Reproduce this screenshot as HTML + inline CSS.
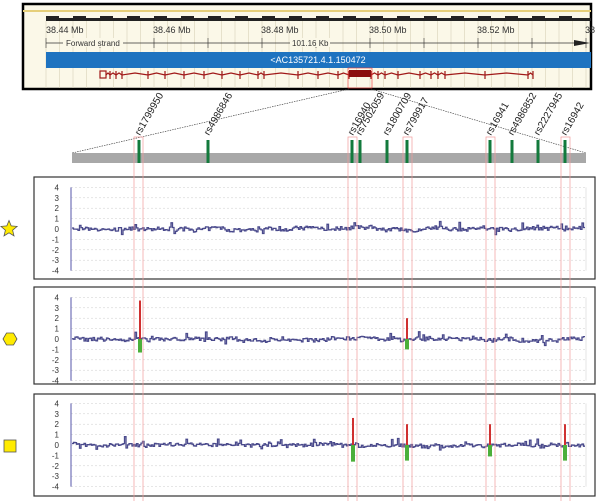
<!DOCTYPE html>
<html><head><meta charset="utf-8"><style>
html,body{margin:0;padding:0;background:#fff;width:600px;height:501px;overflow:hidden}
svg{display:block;font-family:"Liberation Sans",sans-serif}
</style></head><body>
<svg id="s" width="600" height="501" viewBox="0 0 600 501" xmlns="http://www.w3.org/2000/svg">
<rect x="23" y="4" width="568" height="85" fill="#fbf8e8" stroke="#000" stroke-width="2.5"/>
<line x1="23" y1="11" x2="591" y2="11" stroke="#e6cf7a" stroke-width="2"/>
<g id="grid" stroke="#d8d2b8" stroke-width="0.6"></g>
<rect x="46" y="18" width="545" height="3" fill="#222"/>
<g id="ticks"></g>
<g font-size="9" fill="#333">
<text x="46" y="33">38.44 Mb</text><text x="153" y="33">38.46 Mb</text><text x="261" y="33">38.48 Mb</text><text x="369" y="33">38.50 Mb</text><text x="477" y="33">38.52 Mb</text><text x="585" y="33">38</text>
</g>
<line x1="46" y1="43" x2="580" y2="43" stroke="#333" stroke-width="0.8"/>
<rect x="63" y="38" width="60" height="9" fill="#fbf8e8"/><text x="66" y="46" font-size="8" fill="#333">Forward strand</text>
<rect x="290" y="38" width="40" height="9" fill="#fbf8e8"/><text x="292" y="46" font-size="8" fill="#333">101.16 Kb</text>
<polygon points="574,40 590,43 574,46" fill="#222"/>
<rect x="46" y="52" width="545" height="16" fill="#1e73c0"/>
<text x="318" y="63" font-size="9" fill="#fff" text-anchor="middle">&lt;AC135721.4.1.150472</text>
<g id="gene" stroke="#a01818" fill="none" stroke-width="1.2"></g>
<rect x="349" y="70" width="22" height="7" fill="#8b0f0f"/>
<rect x="348" y="68" width="24" height="20" fill="none" stroke="#e33" stroke-width="0.6"/>
<line x1="349" y1="89" x2="72" y2="153" stroke="#333" stroke-width="0.6" stroke-dasharray="1.5,1"/>
<line x1="371" y1="89" x2="586" y2="153" stroke="#333" stroke-width="0.6" stroke-dasharray="1.5,1"/>
<rect x="72" y="153" width="514" height="10" fill="#a8a8a8"/>
<g id="snps"></g>
<g id="panels"></g>
<polygon id="star" fill="#ffeb00" stroke="#555" stroke-width="0.8"/>
<polygon points="3,339 6.5,333 13.5,333 17,339 13.5,345 6.5,345" fill="#ffeb00" stroke="#555" stroke-width="0.8"/>
<rect x="4" y="440" width="12" height="12" fill="#ffeb00" stroke="#555" stroke-width="0.8"/>
<g id="hl"></g>
</svg>
<script>
var S=document.getElementById('s'),NS='http://www.w3.org/2000/svg';
function el(t,a,p,txt){var e=document.createElementNS(NS,t);for(var k in a)e.setAttribute(k,a[k]);if(txt)e.textContent=txt;(p||S).appendChild(e);return e;}
var seed=7;function r(){seed=(seed*16807)%2147483647;return seed/2147483647;}
var g=document.getElementById('grid');for(var x=46;x<591;x+=13.5)el('line',{x1:x,y1:21,x2:x,y2:88},g);
var t=document.getElementById('ticks');for(var i=0;i<20;i++){el('rect',{x:46+i*27,y:16,width:13,height:3,fill:'#222'},t);}
for(var i=0;i<11;i++){var x=46+i*54;el('line',{x1:x,y1:38,x2:x,y2:48,stroke:'#333','stroke-width':0.6},t);}
var ge=document.getElementById('gene');
el('rect',{x:100,y:71,width:6,height:7},ge);
var exons=[110,116,122,148,165,184,204,222,240,258,264,298,318,338,349,371,378,385,398,420,431,438,445,485,528,533];
var d='M106 75';var px=106;for(var i=0;i<exons.length;i++){var ex=exons[i];var m=(px+ex)/2;d+=' L'+m+' 73 L'+ex+' 75';px=ex;}
el('path',{d:d},ge);
exons.forEach(function(x){el('line',{x1:x,y1:71,x2:x,y2:79},ge);});
var sn=document.getElementById('snps');
var snp=[[139,'rs1799950'],[208,'rs4986846'],[352,'rs16940'],[360,'rs7502059'],[387,'rs1800709'],[407,'rs799917'],[490,'rs16941'],[512,'rs4986852'],[538,'rs2227945'],[565,'rs16942']];
snp.forEach(function(s){el('rect',{x:s[0]-1.5,y:140,width:3,height:23,fill:'#137a3c'},sn);
 el('text',{x:0,y:0,'font-size':10,fill:'#222',transform:'translate('+(s[0]+1)+',136) rotate(-60)'},sn,s[1]);});
var P=document.getElementById('panels');
var panels=[[177,229],[287,339],[394,445]];
var spikes=[[],[[140,3.7,-1.3],[407,2.0,-1.0]],[[353,2.6,-1.6],[407,2.0,-1.5],[490,2.0,-1.1],[565,2.0,-1.5]]];
panels.forEach(function(p,pi){
 var top=p[0],z=p[1],u=10.4;
 el('rect',{x:34,y:top,width:561,height:pi==1?97:102,fill:'#fff',stroke:'#333','stroke-width':1.2},P);
 for(var v=4;v>=-4;v--){var y=z-v*u;
  el('line',{x1:71,y1:y,x2:586,y2:y,stroke:'#ccc','stroke-width':0.5,'stroke-dasharray':'2,2'},P);
  el('text',{x:59,y:y+3,'font-size':8,fill:'#333','text-anchor':'end'},P,''+v);}
 el('line',{x1:586,y1:z-4*u,x2:586,y2:z+4*u,stroke:'#ccc','stroke-width':0.5},P);
 el('line',{x1:71,y1:z-4*u,x2:71,y2:z+4*u,stroke:'#5555aa','stroke-width':1},P);
 var pts='';var base=0,v=0;
 for(var x=72;x<585;x+=1.5){base=base*0.92+(r()-0.5)*0.15;v=base+(r()-0.5)*0.45;if(r()<0.1)v+=(r()-0.4)*1.3;var y=(z-v*u*0.8).toFixed(1);pts+=x.toFixed(1)+','+y+' '+(x+1.5).toFixed(1)+','+y+' ';}
 el('polyline',{points:pts,fill:'none',stroke:'#4a4a8c','stroke-width':1.3},P);
 spikes[pi].forEach(function(s){
  el('rect',{x:s[0]-1,y:z-s[1]*u,width:2,height:s[1]*u,fill:'#d03030'},P);
  el('rect',{x:s[0]-2,y:z,width:4,height:-s[2]*u,fill:'#4caf3a'},P);});
});
var H=document.getElementById('hl');
[[134,143],[348,357],[403,412],[486,495],[561,570]].forEach(function(b){
 el('rect',{x:b[0],y:137,width:b[1]-b[0],height:366,fill:'none',stroke:'#f29a9a','stroke-width':0.7},H);});
var st='';for(var i=0;i<10;i++){var a=-Math.PI/2+i*Math.PI/5,rr=i%2?3.8:8.5;st+=(9+rr*Math.cos(a)).toFixed(1)+','+(229+rr*Math.sin(a)).toFixed(1)+' ';}
document.getElementById('star').setAttribute('points',st);
</script>
</body></html>
